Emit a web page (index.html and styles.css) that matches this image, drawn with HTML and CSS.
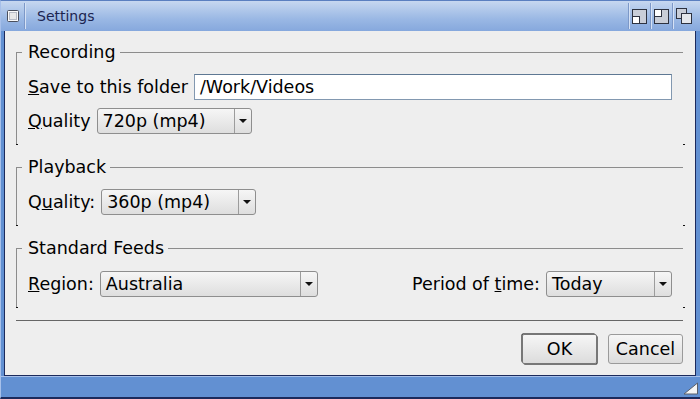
FILE: index.html
```html
<!DOCTYPE html>
<html lang="en">
<head>
  <meta charset="UTF-8">
  <title>Settings</title>
  <link rel="stylesheet" href="styles.css">
</head>
<body>

<div class="window">
  <div class="titlebar">
    <span class="close-gadget">
      <svg width="12" height="12" viewBox="0 0 12 12"><rect x="0.5" y="0.5" width="11" height="11" rx="1" fill="#fafafa" stroke="#4a4f5c"/><rect x="2.5" y="2.5" width="7" height="7" fill="#e8e8e8" stroke="#b8bcc6"/></svg>
    </span>
    <span class="title">Settings</span>
    <span class="gadget">
      <svg width="15" height="15" viewBox="0 0 15 15"><rect x="0.5" y="0.5" width="14" height="14" fill="#c9ced8" stroke="#2d3240"/><rect x="0.5" y="7.5" width="7" height="7" fill="#fff" stroke="#2d3240"/></svg>
    </span>
    <span class="gadget">
      <svg width="15" height="15" viewBox="0 0 15 15"><rect x="0.5" y="0.5" width="14" height="14" fill="#c9ced8" stroke="#2d3240"/><rect x="0.5" y="0.5" width="7" height="7" fill="#fff" stroke="#2d3240"/></svg>
    </span>
    <span class="gadget">
      <svg width="16" height="16" viewBox="0 0 16 16"><rect x="0.5" y="0.5" width="10" height="10" fill="#c9ced8" stroke="#2d3240"/><rect x="5.5" y="5.5" width="10" height="10" fill="#e4e7ec" stroke="#2d3240"/></svg>
    </span>
  </div>

  <div class="frame">
    <div class="content">
      <fieldset class="group">
        <legend>Recording</legend>
        <div class="row">
          <label><u>S</u>ave to this folder</label>
          <div class="field">/Work/Videos</div>
        </div>
        <div class="row">
          <label><u>Q</u>uality</label>
          <div class="select w-quality">
            <span class="value">720p (mp4)</span>
            <span class="arrow"><i></i></span>
          </div>
        </div>
      </fieldset>

      <fieldset class="group">
        <legend>Playback</legend>
        <div class="row">
          <label>Q<u>u</u>ality:</label>
          <div class="select w-quality">
            <span class="value">360p (mp4)</span>
            <span class="arrow"><i></i></span>
          </div>
        </div>
      </fieldset>

      <fieldset class="group feeds">
        <legend>Standard Feeds</legend>
        <div class="row">
          <label><u>R</u>egion:</label>
          <div class="select w-region">
            <span class="value">Australia</span>
            <span class="arrow"><i></i></span>
          </div>
          <span class="spacer"></span>
          <label>Period of <u>t</u>ime:</label>
          <div class="select w-period">
            <span class="value">Today</span>
            <span class="arrow"><i></i></span>
          </div>
        </div>
      </fieldset>

      <div class="separator"></div>

      <div class="buttons">
        <button class="default">OK</button>
        <button>Cancel</button>
      </div>
    </div>
  </div>

  <div class="statusbar">
    <svg class="resize" width="16" height="13" viewBox="0 0 16 13"><path d="M1 12 L14.5 12 L14.5 1 Z" fill="#f4f4f4" stroke="#5a5f6a" stroke-linejoin="round"/></svg>
  </div>
</div>

</body>
</html>
```

FILE: styles.css
```css
body {
  margin: 0;
  font-family: "DejaVu Sans", "Liberation Sans", sans-serif;
  font-size: 17.5px;
  color: #000;
  background: #eeeeee;
}

.window {
  width: 700px;
  height: 399px;
  display: flex;
  flex-direction: column;
}

/* title bar */
.titlebar {
  height: 31px;
  box-sizing: border-box;
  display: flex;
  align-items: center;
  background: linear-gradient(#c6d7f0, #9ab8e4 60%, #86a8dd);
  border-left: 1px solid #a7c0ea;
  border-top: 1px solid #5a7fc0;
}

.close-gadget {
  display: flex;
  margin-left: 6px;
  padding-right: 5px;
  height: 26px;
  align-items: center;
  border-right: 1px solid #7c98c8;
  box-shadow: 1px 0 #d6e2f5;
}

.title {
  flex: 1;
  margin-left: 12px;
  font-size: 14px;
  color: #1b2450;
}

.gadget {
  display: flex;
  align-items: center;
  height: 26px;
  padding: 0 3px 0 3px;
  border-left: 1px solid #7c98c8;
  box-shadow: inset 1px 0 #d6e2f5;
}

.gadget:last-child {
  margin-right: 5px;
}

/* window frame */
.frame {
  flex: 1;
  display: flex;
  background: #6290d2;
  border-left: 1px solid #a7c0ea;
  padding: 0 4px 0 3px;
}

.content {
  flex: 1;
  display: flex;
  flex-direction: column;
  background: #eeeeee;
  border: 1px solid #1c2a5c;
  border-top: none;
  padding: 11px 12px 0 11px;
}

/* groups */
.group {
  position: relative;
  margin: 0 0 12px 0;
  border: none;
  border-top: 1px solid #8c8c8c;
  border-left: 1px solid #8c8c8c;
  padding: 12px 11px 11px 5px;
  display: flex;
  flex-direction: column;
  gap: 8px;
}

.group::after {
  content: "";
  position: absolute;
  left: -1px;
  bottom: 0;
  width: 2px;
  height: 1px;
  background: #111;
  box-shadow: 667px 0 #111;
}

.group.feeds {
  padding-top: 13px;
  margin-bottom: 0;
}

legend {
  padding: 0 4px 0 6px;
  line-height: 20px;
}

.row {
  display: flex;
  align-items: center;
  gap: 6px;
  height: 26px;
  padding-left: 6px;
}

.spacer {
  flex: 1;
}

.field {
  flex: 1;
  height: 26px;
  box-sizing: border-box;
  background: #fff;
  border: 1px solid #8298b0;
  border-top-color: #5e7893;
  padding: 0 5px;
  line-height: 24px;
}

.select {
  display: flex;
  height: 26px;
  box-sizing: border-box;
  border: 1px solid #8e8e8e;
  border-radius: 3px;
  background: linear-gradient(#f6f6f6, #dedede);
}

.select .value {
  flex: 1;
  padding-left: 5px;
  line-height: 24px;
}

.select .arrow {
  width: 16px;
  display: flex;
  align-items: center;
  justify-content: center;
  border-left: 1px solid #9c9c9c;
}

.select .arrow i {
  width: 0;
  height: 0;
  border-left: 4px solid transparent;
  border-right: 4px solid transparent;
  border-top: 4px solid #111;
}

.w-quality { width: 155px; }
.w-region { width: 218px; }
.w-period { width: 126px; }

.separator {
  margin-top: 12px;
  height: 1px;
  background: #666;
}

.buttons {
  display: flex;
  justify-content: flex-end;
  gap: 11px;
  margin-top: 13px;
}

button {
  font-family: inherit;
  font-size: 17.5px;
  height: 30px;
  width: 75px;
  padding: 0;
  border: 1px solid #9a9a9a;
  border-radius: 3px;
  background: linear-gradient(#f6f6f6, #dcdcdc);
  color: #000;
}

button.default {
  border-color: #777;
  border-radius: 2px;
  box-shadow: -1px -1px 0 -0.5px #000, 1px 1px 0 -0.5px #000;
}

/* bottom bar */
.statusbar {
  height: 23px;
  box-sizing: border-box;
  display: flex;
  justify-content: flex-end;
  align-items: flex-end;
  background: #6290d2;
  border-top: 1px solid #a7c0ea;
  border-left: 1px solid #a7c0ea;
  border-bottom: 2px solid #1c2a5c;
  padding: 0 1px 2px 0;
}
```
